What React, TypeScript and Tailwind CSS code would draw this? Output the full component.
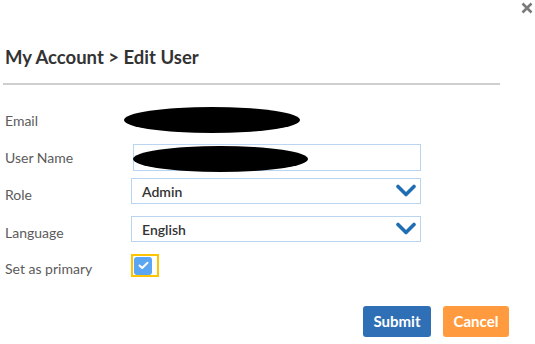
import React, { useState } from 'react';

const Chevron: React.FC = () => (
  <svg width="20" height="14" viewBox="0 0 20 14" fill="none">
    <path d="M2 2.5 L10 10.5 L18 2.5" stroke="#1f6db3" strokeWidth="3.6" strokeLinecap="round" strokeLinejoin="round" />
  </svg>
);

const Label: React.FC<{ children: React.ReactNode; low?: boolean }> = ({ children, low }) => (
  <div className={`w-[131px] shrink-0 pl-[5px] text-[14px] text-[#5b5b5b] ${low ? 'pt-[6px]' : ''}`}>{children}</div>
);

const App: React.FC = () => {
  const [primary, setPrimary] = useState(true);

  return (
    <div className="relative w-[535px] h-[344px] bg-white overflow-hidden" style={{ fontFamily: 'Lato, "Open Sans", sans-serif' }}>
      <button className="absolute top-[2px] right-[2px] text-[#7a7a7a]">
        <svg width="12" height="12" viewBox="0 0 12 12">
          <path d="M1.5 1.5 L10.5 10.5 M10.5 1.5 L1.5 10.5" stroke="currentColor" strokeWidth="2.6" />
        </svg>
      </button>

      <h1 className="pt-[46px] pl-[5px] text-[18.5px] font-bold text-[#333] leading-[22px]">My Account &gt; Edit User</h1>
      <div className="mt-[15px] ml-[3px] w-[497px] h-[2px] bg-[#cfcfcf]" />

      <div className="flex flex-col mt-[17px]">
        <div className="flex items-center h-[36px]">
          <Label>Email</Label>
          <div className="-ml-[7px] w-[176px] h-[26px] rounded-[50%] bg-black" />
        </div>

        <div className="flex items-center h-[27px] mt-[6px]">
          <Label>User Name</Label>
          <div className="ml-[2px] w-[288px] h-[27px] border border-[#b9d5f1] flex items-center">
            <div className="-ml-[1px] mt-[2px] w-[175px] h-[26px] rounded-[50%] bg-black" />
          </div>
        </div>

        <div className="flex items-center h-[26px] mt-[7px]">
          <Label low>Role</Label>
          <div className="w-[290px] h-[26px] border border-[#b9d5f1] flex items-center justify-between pl-[10px] pr-[4px]">
            <span className="text-[14px] font-semibold text-[#333]">Admin</span>
            <Chevron />
          </div>
        </div>

        <div className="flex items-center h-[26px] mt-[12px]">
          <Label low>Language</Label>
          <div className="w-[290px] h-[26px] border border-[#b9d5f1] flex items-center justify-between pl-[10px] pr-[4px]">
            <span className="text-[14px] font-semibold text-[#333]">English</span>
            <Chevron />
          </div>
        </div>

        <div className="flex items-center h-[23px] mt-[12px]">
          <Label low>Set as primary</Label>
          <button
            onClick={() => setPrimary(!primary)}
            className="w-[28px] h-[23px] border-2 border-[#ffc400] flex items-center pl-[1px] bg-white"
          >
            <span className={`w-[18px] h-[18px] rounded-[3px] flex items-center justify-center ${primary ? 'bg-[#5ba6f2]' : 'bg-white border border-[#aaa]'}`}>
              {primary && (
                <svg width="11" height="9" viewBox="0 0 11 9">
                  <path d="M1.5 4.5 L4.2 7 L9.5 1.8" stroke="white" strokeWidth="2" fill="none" strokeLinecap="round" strokeLinejoin="round" />
                </svg>
              )}
            </span>
          </button>
        </div>

        <div className="flex justify-end gap-[12px] mt-[29px] pr-[26px]">
          <button className="w-[68px] h-[31px] rounded-[3px] bg-[#2e6fb6] text-white text-[15px] font-bold">Submit</button>
          <button className="w-[66px] h-[31px] rounded-[3px] bg-[#ff9b3e] text-white text-[15px] font-bold">Cancel</button>
        </div>
      </div>
    </div>
  );
};

export default App;
